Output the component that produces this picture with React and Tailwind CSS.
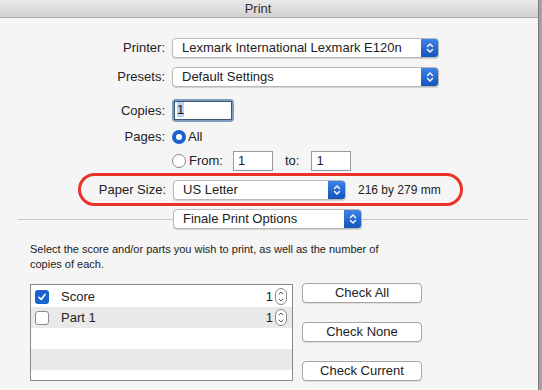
const font = { fontFamily: '"Liberation Sans", Arial, sans-serif' }

function Chevrons() {
  return (
    <svg width="8" height="12" viewBox="0 0 8 12" fill="none" stroke="white" strokeWidth="1.4" strokeLinecap="round" strokeLinejoin="round">
      <path d="M1.5 4.5 L4 2 L6.5 4.5" />
      <path d="M1.5 7.5 L4 10 L6.5 7.5" />
    </svg>
  )
}

function Popup({ width, children }) {
  return (
    <div
      className="flex h-[20px] rounded-[4px] border border-[#b9b9b9] bg-white shadow-[0_1px_1px_rgba(0,0,0,0.15)] overflow-hidden"
      style={{ width }}
    >
      <div className="flex-1 pl-[9px] text-[13px] leading-[18px] text-[#222]">{children}</div>
      <div className="w-[17px] flex items-center justify-center bg-gradient-to-b from-[#3f83e6] to-[#1354bd]">
        <Chevrons />
      </div>
    </div>
  )
}

function Label({ children }) {
  return <div className="w-[166px] pr-[1px] text-right text-[13px] text-[#222]">{children}</div>
}

function Field({ w, children }) {
  return (
    <div className="h-[20px] border border-[#9a9a9a] bg-white pl-[4px] text-[13px] leading-[18px] text-[#222]" style={{ width: w }}>
      {children}
    </div>
  )
}

function Stepper() {
  return (
    <div className="w-[12px] h-[17px] rounded-[6px] border border-[#8c8c8c] bg-white flex flex-col items-center justify-center gap-[1px]">
      <svg width="6" height="13" viewBox="0 0 6 13" fill="none" stroke="#555" strokeWidth="1" strokeLinecap="round">
        <path d="M1 4 L3 2 L5 4" />
        <path d="M1 9 L3 11 L5 9" />
      </svg>
    </div>
  )
}

function Row({ checked, name, alt }) {
  return (
    <div className={`h-[21px] flex items-center ${alt ? 'bg-[#e9e9e9]' : 'bg-white'}`}>
      {checked ? (
        <div className="ml-[4px] w-[14px] h-[14px] rounded-[3px] bg-[#1a62d1] flex items-center justify-center">
          <svg width="10" height="10" viewBox="0 0 10 10" fill="none" stroke="white" strokeWidth="1.7" strokeLinecap="round" strokeLinejoin="round">
            <path d="M2 5.3 L4.2 7.5 L8 2.5" />
          </svg>
        </div>
      ) : (
        <div className="ml-[4px] w-[14px] h-[14px] rounded-[3px] border border-[#8a8a8a] bg-white" />
      )}
      <div className="ml-[12px] flex-1 text-[13px] text-[#222]">{name}</div>
      <div className="text-[13px] text-[#222] mr-[2px]">1</div>
      <div className="mr-[5px]"><Stepper /></div>
    </div>
  )
}

function Btn({ children }) {
  return (
    <div className="w-[120px] h-[20px] rounded-[4px] border border-[#a6a6a6] bg-white shadow-[0_1px_1px_rgba(0,0,0,0.1)] text-center text-[13px] leading-[18px] text-[#222]">
      {children}
    </div>
  )
}

export default function App() {
  return (
    <div className="w-[542px] h-[390px] overflow-hidden flex bg-[#f5f5f5]" style={font}>
      <div className="w-[538px] flex flex-col">
        <div className="h-[18px] shrink-0 border-b border-[#ababab] bg-gradient-to-b from-[#e9e9e9] to-[#d2d2d2] flex justify-center pr-[22px] text-[13px] leading-[17px] text-[#333]">
          Print
        </div>

        <div className="mt-[20px] flex items-center gap-[6px]">
          <Label>Printer:</Label>
          <Popup width={267}>Lexmark International Lexmark E120n</Popup>
        </div>
        <div className="mt-[9px] flex items-center gap-[6px]">
          <Label>Presets:</Label>
          <Popup width={267}>Default Settings</Popup>
        </div>

        <div className="mt-[12px] flex items-center gap-[6px] h-[23px]">
          <Label>Copies:</Label>
          <div className="w-[62px] h-[23px] rounded-[4px] bg-[#7e9cc0] p-[2px]">
            <div className="h-full border border-[#3e5670] bg-white pl-[2px] text-[13px] leading-[16px] text-[#111]">
              <span className="bg-[#b3d4fc]">1</span>
            </div>
          </div>
        </div>

        <div className="mt-[7px] flex items-center gap-[6px] h-[15px]">
          <Label>Pages:</Label>
          <div className="flex items-center gap-[2px]">
            <div className="w-[14px] h-[14px] rounded-full bg-[#1a62d1] flex items-center justify-center">
              <div className="w-[6px] h-[6px] rounded-full bg-white" />
            </div>
            <span className="text-[13px] text-[#222]">All</span>
          </div>
        </div>

        <div className="mt-[7px] flex items-center h-[20px]">
          <div className="w-[172px]" />
          <div className="w-[14px] h-[14px] rounded-full border border-[#8a8a8a] bg-white" />
          <span className="ml-[3px] text-[13px] text-[#222]">From:</span>
          <div className="ml-[10px]"><Field w={40}>1</Field></div>
          <span className="ml-[12px] text-[13px] text-[#222]">to:</span>
          <div className="ml-[12px]"><Field w={40}>1</Field></div>
        </div>

        <div className="mt-[2px] ml-[78px] w-[385px] h-[33px] rounded-full border-[3px] border-[#ea3229] flex items-center">
          <div className="w-[85px] text-right text-[13px] text-[#222]">Paper Size:</div>
          <div className="ml-[7px]"><Popup width={173}>US Letter</Popup></div>
          <span className="ml-[12px] text-[12px] text-[#222]">216 by 279 mm</span>
        </div>

        <div className="mt-[3px] flex items-center">
          <div className="ml-[18px] w-[155px] h-px bg-[#c8c8c8]" />
          <Popup width={189}>Finale Print Options</Popup>
          <div className="w-[166px] h-px bg-[#c8c8c8]" />
        </div>

        <div className="mt-[13px] pl-[30px] text-[11px] leading-[15px] text-[#222]">
          Select the score and/or parts you wish to print, as well as the number of
          <br />
          copies of each.
        </div>

        <div className="mt-[12px] flex">
          <div className="ml-[30px] w-[263px] h-[97px] border border-[#8a8a8a] bg-white py-px overflow-hidden">
            <Row checked name="Score" />
            <Row name="Part 1" alt />
            <div className="h-[21px] bg-white" />
            <div className="h-[21px] bg-[#e9e9e9]" />
          </div>
          <div className="ml-[9px] -mt-px flex flex-col gap-[19px]">
            <Btn>Check All</Btn>
            <Btn>Check None</Btn>
            <Btn>Check Current</Btn>
          </div>
        </div>
      </div>
      <div className="w-[4px] border-l border-[#7a7a7a] bg-[#a3a3a3]" />
    </div>
  )
}
